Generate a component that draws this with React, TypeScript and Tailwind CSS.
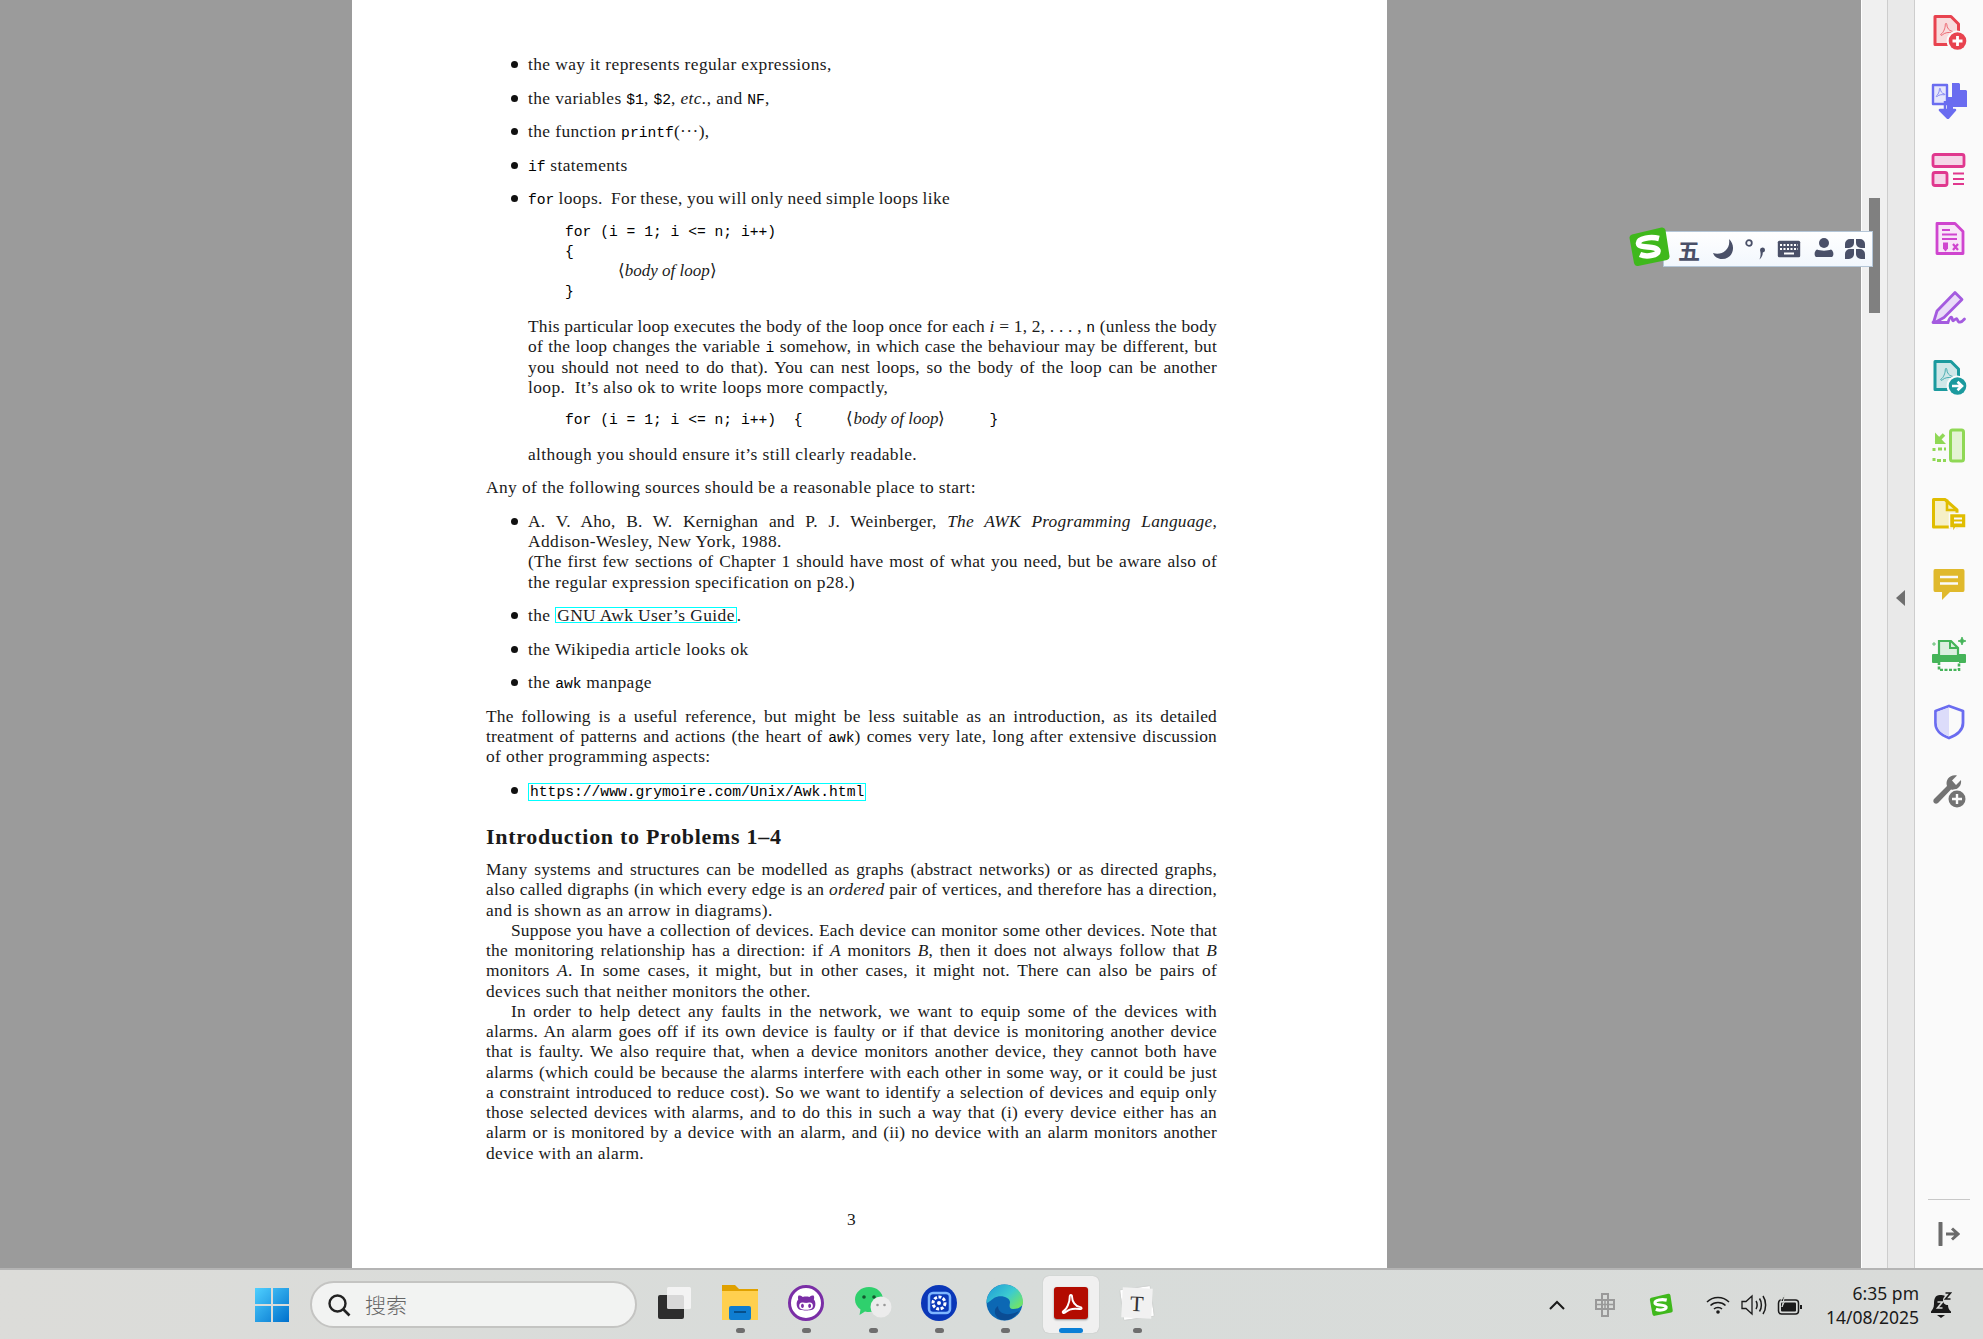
import type { ReactNode } from 'react';
import { FaGithubAlt } from 'react-icons/fa';

// Acrobat swoosh, drawn in a 24 box
const SWOOSH = 'M5 19.5C8 18 11 11 10.8 6.5 10.7 4 13 4 13 6.5 13 10.5 16 15 20 15.6 22.5 16 22.3 18 20 17.6 15.5 16.8 10 17.5 6.8 20.6 5 22.2 3.5 20.5 5 19.5Z';

function Mono({ children }: { children: ReactNode }) {
  return <span className="font-['Liberation_Mono',monospace] text-[14.67px] leading-none tracking-normal text-black">{children}</span>;
}

function J({ children }: { children: ReactNode }) {
  return <div className="text-justify tracking-[0.2px] [text-align-last:justify] [word-spacing:-2.5px]">{children}</div>;
}

function Bullet({ children }: { children: ReactNode }) {
  return (
    <div className="relative mt-[13.3px] pl-[42px]">
      <span className="absolute left-[25px] top-[7px] h-[7px] w-[7px] rounded-full bg-[#111]" />
      {children}
    </div>
  );
}

function Code({ children }: { children: ReactNode }) {
  return <div className="h-[20.25px] whitespace-pre pl-[79px] font-['Liberation_Mono',monospace] text-[14.67px] tracking-normal text-black">{children}</div>;
}

function BodyOfLoop() {
  return (
    <span className="font-['Liberation_Serif',serif] text-[17px] leading-none text-[#1a1a1a]">
      ⟨<i>body of loop</i>⟩
    </span>
  );
}

function PdfPage() {
  return (
    <div className="h-full w-[1035px] bg-white pl-[134px] pr-[170px] pt-[54px] font-['Liberation_Serif',serif] text-[17.4px] leading-[20.25px] tracking-[0.4px] text-[#1a1a1a]">
      <div className="-mt-[13.3px]" />
      <Bullet>the way it represents regular expressions,</Bullet>
      <Bullet>the variables <Mono>$1</Mono>, <Mono>$2</Mono>, <i>etc.</i>, and <Mono>NF</Mono>,</Bullet>
      <Bullet>the function <Mono>printf</Mono>(···),</Bullet>
      <Bullet><Mono>if</Mono> statements</Bullet>
      <Bullet>
        <span className="[word-spacing:-0.7px]"><Mono>for</Mono> loops.&nbsp; For these, you will only need simple loops like</span>
        <div className="-ml-[42px] mt-[13.3px]">
          <Code>for (i = 1; i &lt;= n; i++)</Code>
          <Code>{'{'}</Code>
          <Code>{'      '}<BodyOfLoop /></Code>
          <Code>{'}'}</Code>
        </div>
        <div className="mt-[13.3px]">
          <J>This particular loop executes the body of the loop once for each <i>i</i> = 1, 2, . . . , <Mono>n</Mono> (unless the body</J>
          <J>of the loop changes the variable <Mono>i</Mono> somehow, in which case the behaviour may be different, but</J>
          <J>you should not need to do that). You can nest loops, so the body of the loop can be another</J>
          <div>loop.&nbsp; It’s also ok to write loops more compactly,</div>
        </div>
        <div className="-ml-[42px] mt-[13.3px]">
          <Code>for (i = 1; i &lt;= n; i++)  {'{'}     <BodyOfLoop />     {'}'}</Code>
        </div>
        <div className="mt-[13.3px]">although you should ensure it’s still clearly readable.</div>
      </Bullet>
      <div className="mt-[13.3px]">Any of the following sources should be a reasonable place to start:</div>
      <Bullet>
        <J>A. V. Aho, B. W. Kernighan and P. J. Weinberger, <i>The AWK Programming Language</i>,</J>
        <div>Addison-Wesley, New York, 1988.</div>
        <J>(The first few sections of Chapter 1 should have most of what you need, but be aware also of</J>
        <div>the regular expression specification on p28.)</div>
      </Bullet>
      <Bullet>
        <div className="h-[20.25px]">
          the <span className="inline-block border border-[#00ffff] px-px leading-[14px]">GNU Awk User’s Guide</span>.
        </div>
      </Bullet>
      <Bullet>the Wikipedia article looks ok</Bullet>
      <Bullet>the <Mono>awk</Mono> manpage</Bullet>
      <div className="mt-[13.3px]">
        <J>The following is a useful reference, but might be less suitable as an introduction, as its detailed</J>
        <J>treatment of patterns and actions (the heart of <Mono>awk</Mono>) comes very late, long after extensive discussion</J>
        <div>of other programming aspects:</div>
      </div>
      <Bullet>
        <div className="h-[20.25px]">
          <span className="inline-block border border-[#00ffff] px-px font-['Liberation_Mono',monospace] text-[14.67px] leading-[16px] tracking-normal text-black">https://www.grymoire.com/Unix/Awk.html</span>
        </div>
      </Bullet>
      <h2 className="mt-[25px] text-[22px] font-bold leading-[24px] tracking-[0.7px]">Introduction to Problems 1–4</h2>
      <div className="mt-[10px]">
        <J>Many systems and structures can be modelled as graphs (abstract networks) or as directed graphs,</J>
        <J>also called digraphs (in which every edge is an <i>ordered</i> pair of vertices, and therefore has a direction,</J>
        <div>and is shown as an arrow in diagrams).</div>
        <div className="pl-[25px]"><J>Suppose you have a collection of devices. Each device can monitor some other devices. Note that</J></div>
        <J>the monitoring relationship has a direction: if <i>A</i> monitors <i>B</i>, then it does not always follow that <i>B</i></J>
        <J>monitors <i>A</i>. In some cases, it might, but in other cases, it might not. There can also be pairs of</J>
        <div>devices such that neither monitors the other.</div>
        <div className="pl-[25px]"><J>In order to help detect any faults in the network, we want to equip some of the devices with</J></div>
        <J>alarms. An alarm goes off if its own device is faulty or if that device is monitoring another device</J>
        <J>that is faulty. We also require that, when a device monitors another device, they cannot both have</J>
        <J>alarms (which could be because the alarms interfere with each other in some way, or it could be just</J>
        <J>a constraint introduced to reduce cost). So we want to identify a selection of devices and equip only</J>
        <J>those selected devices with alarms, and to do this in such a way that (i) every device either has an</J>
        <J>alarm or is monitored by a device with an alarm, and (ii) no device with an alarm monitors another</J>
        <div>device with an alarm.</div>
      </div>
      <div className="mt-[46px] text-center">3</div>
    </div>
  );
}

function DocWithBadge({ color, tint, badge }: { color: string; tint: string; badge: ReactNode }) {
  return (
    <svg width="36" height="36" viewBox="0 0 36 36" fill="none">
      <path d="M4 2.500H20L27.500 10V30.500H4Z" fill={tint} stroke={color} strokeWidth="3" strokeLinejoin="round" />
      <g transform="translate(6.500 6) scale(.72)">
        <path d={SWOOSH} stroke={color} strokeWidth="1.300" opacity=".8" />
      </g>
      <circle cx="26" cy="27" r="10.500" fill="#fafafa" />
      <circle cx="26.500" cy="27" r="8.800" fill={color} />
      {badge}
    </svg>
  );
}

function RightPanelIcons() {
  return (
    <div className="flex flex-col items-center gap-[33px] pt-[14px]">
      <DocWithBadge color="#e8434f" tint="#f8dcdd" badge={<path d="M26.500 22v10M21.500 27h10" stroke="#fff" strokeWidth="2.800" />} />
      <svg width="36" height="36" viewBox="0 0 36 36" fill="none">
        <path d="M2 2H16V21H2Z" fill="#e6e6fb" stroke="#6a6cf0" strokeWidth="2.400" strokeLinejoin="round" />
        <path d="M21 0H28L36 8V24H21Z" fill="#6a6cf0" />
        <path d="M29 0L36 7H29Z" fill="#fafafa" />
        <path d="M14 18V28M9 27H24L17 35 9 27Z" fill="#6a6cf0" stroke="#6a6cf0" strokeWidth="2.500" strokeLinejoin="round" />
        <path d="M16 14h6v12h-6z" fill="#6a6cf0" />
        <g transform="translate(3 3) scale(.5)">
          <path d={SWOOSH} stroke="#6a6cf0" strokeWidth="1.500" />
        </g>
      </svg>
      <svg width="36" height="36" viewBox="0 0 36 36" fill="none">
        <rect x="2" y="2.500" width="31" height="12" rx="2" fill="#f5d6e8" stroke="#e0388e" strokeWidth="2.800" />
        <rect x="2" y="20.500" width="14" height="13" rx="2" fill="#f5d6e8" stroke="#e0388e" strokeWidth="2.800" />
        <path d="M22 21.500h11M22 27h11M22 32h11" stroke="#e0388e" strokeWidth="1.800" />
      </svg>
      <svg width="36" height="36" viewBox="0 0 36 36" fill="none">
        <path d="M6 2.500H24L32 10.500V32.500H6Z" fill="#f8e6f8" stroke="#cf45cf" strokeWidth="2.800" strokeLinejoin="round" />
        <path d="M11 9h8M11 13.500h15M11 18h15" stroke="#cf45cf" strokeWidth="1.800" />
        <path d="M12 21.500h5v6l-2.500 3-2.500-3Z" fill="#cf45cf" />
        <path d="M22 23l5 6M27 23l-5 6" stroke="#cf45cf" strokeWidth="2.200" />
      </svg>
      <svg width="36" height="36" viewBox="0 0 36 36" fill="none">
        <path d="M2.500 32.500L6 21 24 2.500 31 9.500 13 27.500 4 32.500" fill="#eadcf8" stroke="#a45bdf" strokeWidth="2.800" strokeLinejoin="round" />
        <path d="M2 32.500H17C19 26 21 26 21.500 30 22.500 33 25 26 26.500 30 27.500 33 30 33 33.500 29" stroke="#a45bdf" strokeWidth="2.800" strokeLinecap="round" />
      </svg>
      <DocWithBadge color="#1b9a9e" tint="#cfe7e8" badge={<path d="M21 27h9M26.500 22.800L31 27l-4.500 4.200" stroke="#fff" strokeWidth="2.600" />} />
      <svg width="36" height="36" viewBox="0 0 36 36" fill="none">
        <rect x="19.500" y="2" width="13" height="31" rx="2" fill="#e4f3d4" stroke="#8fd855" strokeWidth="3" />
        <path d="M5 14.500L13 6.500" stroke="#8fd855" strokeWidth="3.500" />
        <path d="M4 4.500v11.500h11Z" fill="#8fd855" />
        <path d="M3 20v3M3 30v3M7 21h8M6 32.500h9" stroke="#8fd855" strokeWidth="3" strokeDasharray="4 2" />
      </svg>
      <svg width="36" height="36" viewBox="0 0 36 36" fill="none">
        <path d="M2.500 2.500H14L26 13V30H2.500Z" fill="#f6f0c6" stroke="#e0bd00" strokeWidth="3" strokeLinejoin="round" />
        <path d="M16 2.500V13H26" stroke="#e0bd00" strokeWidth="2.600" />
        <path d="M18.500 16.500H35V31H24.500L21.500 36V31H18.500Z" fill="#e0bd00" stroke="#fafafa" strokeWidth="1.500" />
        <path d="M23 21.500h8M23 25.500h8" stroke="#fafafa" strokeWidth="1.800" />
      </svg>
      <svg width="36" height="36" viewBox="0 0 36 36" fill="none">
        <path d="M4 3H32Q33.500 3 33.500 5V24Q33.500 26 32 26H19L11 34V26H4Q2.500 26 2.500 24V5Q2.500 3 4 3Z" fill="#e0b92c" />
        <path d="M9 11h18M9 17.500h18" stroke="#fafafa" strokeWidth="2.500" />
      </svg>
      <svg width="36" height="36" viewBox="0 0 36 36" fill="none">
        <path d="M2 20h32v7H2Z" fill="#45b459" stroke="#45b459" strokeWidth="2" strokeLinejoin="round" />
        <path d="M8 20V6h12l7 7v7" fill="#dcefdf" stroke="#45b459" strokeWidth="2.200" />
        <path d="M19 6v7h8" stroke="#45b459" strokeWidth="2" />
        <path d="M31 2l1.200 3 2.800 1-2.800 1-1.200 3-1.200-3-2.800-1 2.800-1ZM3 7v4M1 9h4" fill="#45b459" stroke="#45b459" strokeWidth=".8" />
        <path d="M8 27v8h20v-8" fill="#fafafa" stroke="#45b459" strokeWidth="2.600" strokeDasharray="3 1.500" />
      </svg>
      <svg width="36" height="36" viewBox="0 0 36 36" fill="none">
        <path d="M18 2L32 7V19C32 26 26 31 18 34 10 31 4.500 26 4.500 19V7Z" fill="#fafafa" stroke="#6a6cf0" strokeWidth="2.800" strokeLinejoin="round" />
        <path d="M18 3.500V32.500C11 30 5.800 26 5.800 19V8Z" fill="#dcdcfa" />
      </svg>
      <svg width="36" height="36" viewBox="0 0 36 36" fill="none">
        <path d="M3 26L16 13C14 7 19 1 26 2.500L21 7.500 25 12 30 7C31 13 26 18 20 16.500L7 30C4 32 1 29 3 26Z" fill="#737373" />
        <circle cx="26" cy="26" r="10" fill="#fafafa" />
        <circle cx="26" cy="26" r="8.500" fill="#737373" />
        <path d="M26 21v10M21 26h10" stroke="#fafafa" strokeWidth="2.400" />
      </svg>
    </div>
  );
}

function SogouLogo({ size }: { size: number }) {
  return (
    <svg width={size} height={size} viewBox="0 0 42 42" fill="none">
      <path d="M4 8.500L33.500 1.500Q36.500 1 37.500 4L41.500 30Q42 33 39 34L10 40Q7 40.500 6 37L1.500 12Q1.200 9.500 4 8.500Z" fill="#3fb81c" />
      <path d="M31 12.500C23 10.500 10 12 10.500 17.500 11 23 28 19 30 24.500 31 29 19 31.500 12 28.500" stroke="#fff" strokeWidth="5.500" />
    </svg>
  );
}

function ImeToolbar() {
  return (
    <div className="absolute left-[1628px] top-[226px] flex items-start">
      <div className="relative z-10 h-[42px] w-[42px]">
        <SogouLogo size={42} />
      </div>
      <div className="-ml-[7px] mt-[5px] flex h-[36px] w-[210px] items-center border border-[#b4c6d8] bg-gradient-to-b from-white to-[#f2f7fd] pl-[14px] text-[#4a5068]">
        <span className="w-[36px] font-['Noto_Sans_CJK_SC',sans-serif] text-[22px] font-bold leading-none">五</span>
        <svg className="-ml-[2px] h-[24px] w-[24px]" viewBox="0 0 24 24" fill="#4a5068">
          <path d="M17 2C24 8 22 22 10 22 5 22 2 19 1 16 9 19 19 13 17 2Z" />
        </svg>
        <svg className="ml-[8px] h-[24px] w-[22px]" viewBox="0 0 22 24" fill="none">
          <circle cx="5" cy="6" r="2.800" stroke="#4a5068" strokeWidth="1.800" />
          <path d="M16 13a2.500 2.500 0 1 1 2.800 2.500C18.800 19 17 21 15.500 22.500 16.500 20 16.800 18 16.500 15.500" fill="#4a5068" />
        </svg>
        <svg className="ml-[11px] h-[20px] w-[24px]" viewBox="0 0 24 20" fill="none">
          <rect x="0.800" y="1.800" width="22.400" height="16.400" rx="1.500" fill="#4a5068" />
          <path d="M3 6h18M3 10h18" stroke="#fff" strokeWidth="2" strokeDasharray="2 1.500" />
          <path d="M7 14.500h10" stroke="#fff" strokeWidth="2" />
        </svg>
        <svg className="ml-[13px] h-[24px] w-[20px]" viewBox="0 0 20 24" fill="#4a5068">
          <circle cx="10" cy="6" r="5" />
          <path d="M3 12.500C6 14 14 14 17 12.500 20 14 20 19 18 20H2C0 19 0 14 3 12.500Z" />
        </svg>
        <svg className="ml-[10px] h-[22px] w-[22px]" viewBox="0 0 22 22" fill="#4a5068">
          <path d="M1 6a5 5 0 0 1 5-5h4v4a5 5 0 0 1-5 5H1ZM21 6a5 5 0 0 0-5-5h-4v4a5 5 0 0 0 5 5h4ZM1 16a5 5 0 0 1 5-5h4v5a5 5 0 0 1-5 5H1ZM21 16a5 5 0 0 0-5-5h-4v5a5 5 0 0 0 5 5h4Z" />
        </svg>
      </div>
    </div>
  );
}

function AppSlot({ children, dot = true, active = false }: { children: ReactNode; dot?: boolean; active?: boolean }) {
  return (
    <div className={`relative flex h-[57px] w-[56px] items-center justify-center rounded-[6px] pb-[4px] ${active ? 'bg-[#f0f0f0] shadow-[0_0_1px_#aaa]' : ''}`}>
      {children}
      {dot && !active && <span className="absolute bottom-0 left-[24px] h-[5px] w-[9px] rounded-full bg-[#6e6e6e]" />}
      {active && <span className="absolute bottom-0 left-[16px] h-[5px] w-[24px] rounded-full bg-[#0a7fd6]" />}
    </div>
  );
}

function TaskbarApps() {
  return (
    <div className="ml-[9px] flex gap-[10.200px]">
      <AppSlot dot={false}>
        <svg width="34" height="34" viewBox="0 0 34 34">
          <rect x="1" y="9" width="26" height="24" rx="2" fill="#2d2d2d" />
          <rect x="10" y="1" width="24" height="22" rx="1.500" fill="#f7f7f7" opacity=".85" />
        </svg>
      </AppSlot>
      <AppSlot>
        <svg width="38" height="36" viewBox="0 0 38 36">
          <path d="M1 0H14L18 4H37V34H1Z" fill="#e0a100" />
          <path d="M1 6H37V35H1Z" fill="#ffd04f" />
          <rect x="8" y="21" width="22" height="14" rx="2" fill="#0f7dd0" />
          <path d="M13 27h12" stroke="#064f8a" strokeWidth="2" />
        </svg>
      </AppSlot>
      <AppSlot>
        <div className="relative flex h-[36px] w-[36px] items-center justify-center rounded-full border-[3px] border-[#7a2ea6] bg-white text-[#7a2ea6]">
          <FaGithubAlt size={20} />
        </div>
      </AppSlot>
      <AppSlot>
        <svg width="38" height="34" viewBox="0 0 38 34">
          <path d="M15 1C7 1 1 6.500 1 13.500 1 17.500 3 21 6.500 23.500L5.500 29 11 25.500C12.500 26 14 26 15 26 23 26 29 20 29 13.500 29 6.500 23 1 15 1Z" fill="#2fd06d" />
          <circle cx="10" cy="11" r="1.800" fill="#14582f" />
          <circle cx="20" cy="11" r="1.800" fill="#14582f" />
          <circle cx="27" cy="21" r="10.500" fill="#ececec" />
          <circle cx="23.500" cy="19" r="1.300" fill="#999" />
          <circle cx="30.500" cy="19" r="1.300" fill="#999" />
        </svg>
      </AppSlot>
      <AppSlot>
        <svg width="36" height="36" viewBox="0 0 36 36" fill="none">
          <circle cx="18" cy="18" r="18" fill="#0a37b8" />
          <rect x="8" y="8" width="21" height="20" rx="4" stroke="#7fb6ff" strokeWidth="2.500" />
          <circle cx="18" cy="18" r="6" fill="#0a37b8" stroke="#fff" strokeWidth="3" strokeDasharray="3 1.500" />
          <circle cx="18" cy="18" r="2" fill="#fff" />
        </svg>
      </AppSlot>
      <AppSlot>
        <svg width="37" height="37" viewBox="0 0 37 37">
          <defs>
            <linearGradient id="edgeTop" x1="0" y1="0" x2="1" y2="0.700">
              <stop offset="0" stopColor="#1d9ad8" />
              <stop offset="0.600" stopColor="#3ccbd0" />
              <stop offset="1" stopColor="#6fe36b" />
            </linearGradient>
          </defs>
          <circle cx="18.500" cy="18.500" r="18" fill="#0c68b4" />
          <path d="M0.500 18.500C1 8 9 0.500 18.500 0.500 29 0.500 37 8.500 37 18 37 23 32 25 27 25 22 25 24 20 24 18 24 13 14 10 8 14 4 17 1 20 0.500 18.500Z" fill="url(#edgeTop)" />
          <path d="M12 22C12 30 22 33 33 27 29 34 22 37 17 36 9 35 6 26 12 22Z" fill="#0a4c94" />
        </svg>
      </AppSlot>
      <AppSlot active>
        <div className="flex h-[32px] w-[34px] items-center justify-center rounded-[3px] bg-[#b30b00] shadow-[0_1px_2px_#888]">
          <svg width="26" height="26" viewBox="0 0 24 24" fill="none">
            <path d={SWOOSH} stroke="#fff" strokeWidth="1.800" />
          </svg>
        </div>
      </AppSlot>
      <AppSlot>
        <div className="relative h-[30px] w-[30px]">
          <div className="absolute inset-0 rotate-[-8deg] bg-white shadow-[0_0_1px_#999]" />
          <div className="absolute inset-0 flex rotate-[3deg] items-center justify-center bg-[#f1f1f1] font-['Liberation_Serif',serif] text-[22px] text-[#333]">T</div>
        </div>
      </AppSlot>
    </div>
  );
}

function Tray() {
  return (
    <div className="ml-auto flex items-center text-[#1a1a1a]">
      <svg width="18" height="12" viewBox="0 0 18 12" fill="none">
        <path d="M2 10L9 3l7 7" stroke="#1a1a1a" strokeWidth="2" />
      </svg>
      <svg className="ml-[28px]" width="22" height="24" viewBox="0 0 22 24" fill="none">
        <path d="M2 7h18v9H2ZM8 7V1h6v22H8V7" stroke="#999" strokeWidth="2" />
        <path d="M11 7v9M3 11.500h16" stroke="#999" strokeWidth="1.500" />
      </svg>
      <div className="ml-[33px]"><SogouLogo size={24} /></div>
      <svg className="ml-[33px]" width="24" height="20" viewBox="0 0 24 20" fill="none">
        <path d="M1 7c6-6 16-6 22 0M4.500 10.500c4-4 11-4 15 0M8 14c2-2 6-2 8 0" stroke="#1a1a1a" strokeWidth="1.500" />
        <circle cx="12" cy="17" r="1.800" fill="#1a1a1a" />
      </svg>
      <svg className="ml-[11px]" width="26" height="22" viewBox="0 0 26 22" fill="none">
        <path d="M1 7.500h4L11 2v18l-6-5.500H1Z" stroke="#1a1a1a" strokeWidth="1.300" />
        <path d="M15 7c1.500 2 1.500 6 0 8M18.500 4.500c2.500 3.500 2.500 9.500 0 13M22 2c3.500 5 3.500 13 0 18" stroke="#1a1a1a" strokeWidth="1.500" />
      </svg>
      <svg className="ml-[10px]" width="26" height="22" viewBox="0 0 26 22" fill="none">
        <rect x="1.500" y="6" width="20" height="14" rx="3" stroke="#1a1a1a" strokeWidth="1.500" />
        <rect x="4" y="8.500" width="15" height="9" rx="1" fill="#1a1a1a" />
        <path d="M8 0L3.500 7.500h4L5 13Z" fill="#1a1a1a" stroke="#d8dbd8" strokeWidth="1" />
        <path d="M23 11h2v4h-2Z" fill="#1a1a1a" />
      </svg>
      <div className="ml-[23px] flex flex-col items-end font-['Noto_Sans',sans-serif] text-[17.500px] leading-[24px]">
        <span>6:35 pm</span>
        <span>14/08/2025</span>
      </div>
      <svg className="ml-[11px] mr-[31px]" width="22" height="26" viewBox="0 0 22 26" fill="#1a1a1a">
        <path d="M10 3C5 3 4 7 4 12 4 16 2 18 1 19.500V21H21V19.500C19 18 18 16 18 13 15 13 13 11 13 8 13 6 14 5 15 4 14 3 12 3 10 3Z" />
        <path d="M7 23h8l-4 3Z" />
        <path d="M7.500 10h5l-5 6h5" stroke="#d8dad8" strokeWidth="1.600" fill="none" />
        <path d="M15.500 1h5l-5 6h5" stroke="#1a1a1a" strokeWidth="1.600" fill="none" />
      </svg>
    </div>
  );
}

function Taskbar() {
  return (
    <div className="flex h-[71px] shrink-0 items-center border-t-2 border-[#b4b4b4] bg-gradient-to-r from-[#dcdcd9] via-[#d8dcda] to-[#d9dbd9] pl-[254px]">
      <svg width="36" height="36" viewBox="0 0 36 36">
        <defs>
          <linearGradient id="winLogo" x1="0" y1="0" x2="1" y2="1">
            <stop offset="0" stopColor="#4fd0ff" />
            <stop offset="1" stopColor="#0070cc" />
          </linearGradient>
        </defs>
        <path d="M1 1h16v16H1ZM19 1h16v16H19ZM1 19h16v16H1ZM19 19h16v16H19Z" fill="url(#winLogo)" />
      </svg>
      <div className="ml-[20px] flex h-[47px] w-[327px] items-center rounded-full border-2 border-[#c4c4c2] bg-[#f2f3f2] pl-[15px]">
        <svg width="24" height="24" viewBox="0 0 24 24" fill="none">
          <circle cx="10.500" cy="10.500" r="8" stroke="#222" strokeWidth="2.400" />
          <path d="M16.500 16.500L22.500 22.500" stroke="#222" strokeWidth="2.600" />
        </svg>
        <span className="ml-[14px] font-['Noto_Sans_CJK_SC',sans-serif] text-[21px] font-light text-[#666]">搜索</span>
      </div>
      <TaskbarApps />
      <Tray />
    </div>
  );
}

export default function App() {
  return (
    <div className="relative flex h-[1339px] w-[1983px] flex-col overflow-hidden bg-[#9b9b9b]">
      <div className="flex min-h-0 flex-1">
        <div className="min-w-0 flex-1 pl-[352px]">
          <PdfPage />
        </div>
        <div className="w-[26px] shrink-0 border-l border-white bg-[#f0f0f0] pl-[7px] pt-[198px]">
          <div className="h-[115px] w-[11px] bg-[#808080]" />
        </div>
        <div className="flex w-[28px] shrink-0 items-start justify-center border-x border-[#cdcdcd] bg-[#e9e9e9] pt-[590px]">
          <span className="-ml-[2px] h-0 w-0 border-y-[8px] border-r-[9px] border-y-transparent border-r-[#6f6f6f]" />
        </div>
        <div className="flex w-[68px] shrink-0 flex-col bg-[#fafafa]">
          <RightPanelIcons />
          <div className="mt-auto flex flex-col items-center pb-[22px]">
            <div className="h-px w-[42px] bg-[#c8c8c8]" />
            <svg className="mt-[22px]" width="22" height="24" viewBox="0 0 22 24" fill="none">
              <path d="M2.500 1V23" stroke="#6b6b6b" strokeWidth="4" strokeLinecap="round" />
              <path d="M8 12h11M14 6.500L20 12l-6 5.500" stroke="#6b6b6b" strokeWidth="3" />
            </svg>
          </div>
        </div>
      </div>
      <Taskbar />
      <ImeToolbar />
    </div>
  );
}
